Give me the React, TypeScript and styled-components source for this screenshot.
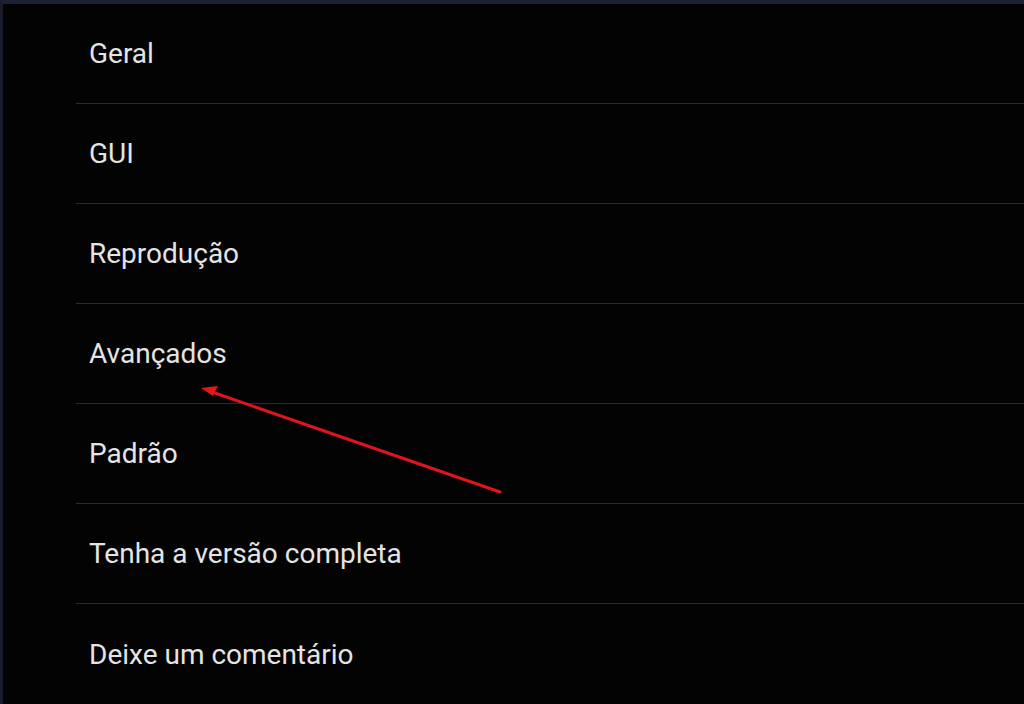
import React from "react";
import styled, { createGlobalStyle } from "styled-components";

const Global = createGlobalStyle`
  html, body { margin: 0; padding: 0; background: #030303; }
  body { font-family: Roboto, "Noto Sans", "DejaVu Sans", sans-serif; overflow: hidden; }
`;

const Screen = styled.div`
  position: relative;
  width: 1024px;
  height: 704px;
  box-sizing: border-box;
  background: #030303;
  border-top: 4px solid #1d2134;
  border-left: 3px solid #191c2b;
  overflow: hidden;
`;

const List = styled.ul`
  list-style: none;
  margin: 0 0 0 73px;
  padding: 0;
  display: flex;
  flex-direction: column;
`;

const Item = styled.li`
  height: 99px;
  display: flex;
  align-items: center;
  padding-left: 13px;
  border-bottom: 1px solid #2a2a2a;
  color: #e4e4e4;
  font-size: 28px;
  letter-spacing: 0;
  &:last-child { border-bottom: none; height: 100px; }
`;

const Arrow = styled.svg`
  position: absolute;
  left: -3px;
  top: -4px;
  pointer-events: none;
`;

const items = [
  "Geral",
  "GUI",
  "Reprodução",
  "Avançados",
  "Padrão",
  "Tenha a versão completa",
  "Deixe um comentário",
];

export default function App() {
  return (
    <>
      <Global />
      <Screen>
        <List>
          {items.map((t) => (
            <Item key={t}>{t}</Item>
          ))}
        </List>
        <Arrow width="1024" height="704" viewBox="0 0 1024 704">
          <line x1="500" y1="492" x2="212" y2="392" stroke="#e0151c" strokeWidth="3" strokeLinecap="round" />
          <polygon points="201,388 218,386 213,396" fill="#e8151c" />
        </Arrow>
      </Screen>
    </>
  );
}
